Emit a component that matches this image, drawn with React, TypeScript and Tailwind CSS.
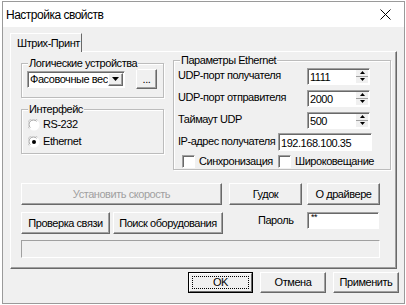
import type { ReactNode } from 'react'

const raised =
  'border border-t-white border-l-white border-r-[#696969] border-b-[#696969] shadow-[inset_-1px_-1px_0_#a0a0a0] bg-[#f0f0f0]'
const sunken =
  'border border-t-[#a0a0a0] border-l-[#a0a0a0] border-r-white border-b-white shadow-[inset_1px_1px_0_#696969] bg-white'

function Group({
  label,
  className,
  children,
}: {
  label: string
  className: string
  children?: ReactNode
}) {
  return (
    <div
      className={`relative border border-[#bcbcbc] shadow-[inset_1px_1px_0_#fff,1px_1px_0_#fff] ${className}`}
    >
      <span className="absolute -top-[7px] left-[6px] bg-[#f0f0f0] px-[1px] leading-[13px]">
        {label}
      </span>
      {children}
    </div>
  )
}

function Btn({
  children,
  className,
  disabled,
}: {
  children: ReactNode
  className: string
  disabled?: boolean
}) {
  return (
    <div
      className={`flex items-center justify-center leading-[13px] ${raised} ${className} ${
        disabled ? 'text-[#a0a0a0]' : ''
      }`}
    >
      {children}
    </div>
  )
}

function Spin({ value }: { value: string }) {
  return (
    <div className={`flex h-[17px] w-[63px] items-stretch ${sunken}`}>
      <span className="flex-1 pl-[2px] pt-[1px] leading-[14px]">{value}</span>
      <div className="my-[1px] mr-[1px] flex w-[12px] flex-col bg-[#f0f0f0]">
        <div className="flex flex-1 items-center justify-center border-b border-[#a0a0a0]">
          <svg width="5" height="3" viewBox="0 0 5 3">
            <path d="M0 3h5L2.5 0z" fill="#000" />
          </svg>
        </div>
        <div className="flex flex-1 items-center justify-center">
          <svg width="5" height="3" viewBox="0 0 5 3">
            <path d="M0 0h5L2.5 3z" fill="#000" />
          </svg>
        </div>
      </div>
    </div>
  )
}

function Radio({ checked, label }: { checked?: boolean; label: string }) {
  return (
    <div className="flex h-[17px] items-center">
      <svg width="12" height="12" viewBox="0 0 12 12">
        <circle cx="6" cy="6" r="5.5" fill="#fff" />
        <path d="M1.2 9.5A5.5 5.5 0 0 1 9.5 1.2" stroke="#c8c8c8" fill="none" />
        <path d="M2.3 8.6A4.3 4.3 0 0 1 8.6 2.3" stroke="#a0a0a0" fill="none" />
        {checked && <circle cx="6" cy="6" r="2" fill="#000" />}
      </svg>
      <span className="ml-[3px] leading-[13px]">{label}</span>
    </div>
  )
}

function Check({ label, className }: { label: string; className?: string }) {
  return (
    <div className={`flex items-center ${className ?? ''}`}>
      <div className={`size-[13px] ${sunken}`} />
      <span className="ml-[4px] leading-[13px]">{label}</span>
    </div>
  )
}

export default function App() {
  return (
    <div className="h-[305px] w-[406px] whitespace-nowrap bg-white pl-[2px] pt-[1px] font-['Liberation_Sans',Arial,sans-serif] text-[11px] tracking-[-0.45px] text-black">
      <div className="flex h-[303px] w-[403px] flex-col border border-[#9a9a9a] bg-[#f0f0f0]">
        {/* title bar */}
        <div className="flex h-[25px] shrink-0 items-center justify-between bg-white pl-[3px] pr-[13px]">
          <span className="mt-[2px] text-[12px] leading-[15px] tracking-[-0.5px]">Настройка свойств</span>
          <svg width="11" height="11" viewBox="0 0 11 11">
            <path d="M0.5 0.5l10 10M10.5 0.5l-10 10" stroke="#000" strokeWidth="1" />
          </svg>
        </div>

        {/* tab */}
        <div className="relative z-10 mt-[6px] ml-[7px] -mb-[1px] flex h-[19px] w-[72px] items-center border-l border-t border-r border-l-white border-t-white border-r-[#696969] bg-[#f0f0f0] pl-[6px] leading-[13px]">
          Штрих-Принт
        </div>

        {/* tab page */}
        <div className="ml-[7px] flex h-[218px] w-[387px] flex-col border border-t-white border-l-white border-r-[#696969] border-b-[#696969] pl-[10px] shadow-[inset_-1px_-1px_0_#a0a0a0]">
          <div className="flex items-start">
            <div className="flex flex-col">
              <Group label="Логические устройства" className="mt-[11px] h-[35px] w-[143px]">
                <div className="flex items-center pl-[5px] pt-[5px]">
                  <div className={`flex h-[17px] w-[98px] items-stretch ${sunken}`}>
                    <span className="flex-1 overflow-hidden pl-[2px] leading-[14px]">
                      Фасовочные весы
                    </span>
                    <div className={`my-[1px] mr-[1px] flex w-[15px] items-center justify-center ${raised}`}>
                      <svg width="7" height="4" viewBox="0 0 7 4">
                        <path d="M0 0h7L3.5 4z" fill="#000" />
                      </svg>
                    </div>
                  </div>
                  <Btn className="ml-[11px] h-[20px] w-[21px]">...</Btn>
                </div>
              </Group>
              <Group label="Интерфейс" className="mt-[11px] h-[45px] w-[143px]">
                <div className="flex flex-col pl-[6px] pt-[6px]">
                  <Radio label="RS-232" />
                  <Radio checked label="Ethernet" />
                </div>
              </Group>
            </div>

            <Group label="Параметры Ethernet" className="mt-[8px] ml-[9px] h-[110px] w-[218px]">
              <div className="flex flex-col pl-[4px] pt-[4px]">
                <div className="flex h-[22px] items-center">
                  <span className="w-[129px] -mt-[2px]">UDP-порт получателя</span>
                  <Spin value="1111" />
                </div>
                <div className="flex h-[22px] items-center">
                  <span className="w-[129px] -mt-[2px]">UDP-порт отправителя</span>
                  <Spin value="2000" />
                </div>
                <div className="flex h-[22px] items-center">
                  <span className="w-[129px] -mt-[2px]">Таймаут UDP</span>
                  <Spin value="500" />
                </div>
                <div className="flex h-[22px] items-center">
                  <span className="w-[100px] -mt-[2px]">IP-адрес получателя</span>
                  <div className={`h-[18px] w-[94px] pl-[2px] pt-[2px] leading-[14px] ${sunken}`}>
                    192.168.100.35
                  </div>
                </div>
                <div className="flex h-[16px] items-center">
                  <Check label="Синхронизация" className="ml-[4px] w-[96px]" />
                  <Check label="Широковещание" />
                </div>
              </div>
            </Group>
          </div>

          <div className="mt-[13px] flex">
            <Btn disabled className="h-[22px] w-[201px]">
              Установить скорость
            </Btn>
            <Btn className="ml-[7px] h-[22px] w-[73px]">Гудок</Btn>
            <Btn className="ml-[5px] h-[22px] w-[73px]">О драйвере</Btn>
          </div>

          <div className="mt-[7px] flex items-start">
            <Btn className="h-[22px] w-[89px]">Проверка связи</Btn>
            <Btn className="ml-[3px] h-[22px] w-[110px]">Поиск оборудования</Btn>
            <span className="ml-[35px] mt-[2px] w-[49px] leading-[13px]">Пароль</span>
            <div className={`h-[17px] w-[72px] pl-[3px] text-[9px] leading-[9px] ${sunken}`}>**</div>
          </div>

          <div className="mt-[6px] h-[18px] w-[359px] border border-t-[#a0a0a0] border-l-[#a0a0a0] border-r-white border-b-white" />
        </div>

        {/* dialog buttons */}
        <div className="mt-[3px] flex justify-end gap-[7px] pr-[5px]">
          <div className="h-[21px] w-[65px] border border-black">
            <div className="flex h-full items-center justify-center border border-t-white border-l-white border-r-[#696969] border-b-[#696969] p-[2px]">
              <div className="flex h-full w-full items-center justify-center border border-dotted border-black leading-[13px]">
                OK
              </div>
            </div>
          </div>
          <Btn className="h-[21px] w-[66px]">Отмена</Btn>
          <Btn className="h-[21px] w-[66px]">Применить</Btn>
        </div>
      </div>
    </div>
  )
}
